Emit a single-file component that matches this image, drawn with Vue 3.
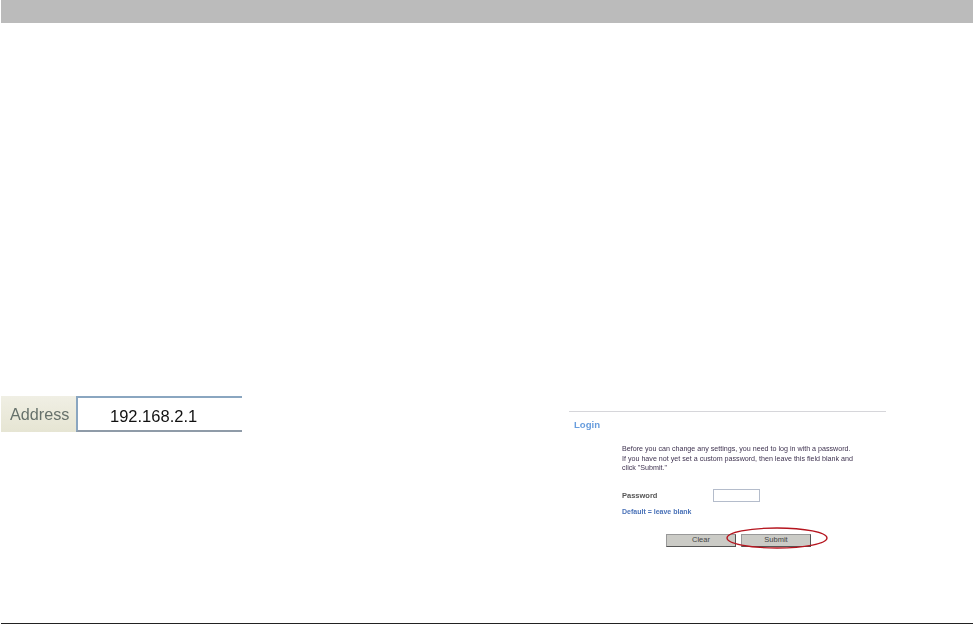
<script setup>
const lines = [
  'Before you can change any settings, you need to log in with a password.',
  'If you have not yet set a custom password, then leave this field blank and',
  'click "Submit."'
]
</script>

<template>
  <div class="page">
    <header class="bar"></header>
    <main class="content">
      <section class="address">
        <div class="label">Address</div>
        <div class="field">192.168.2.1</div>
      </section>
      <section class="login">
        <h2 class="title">Login</h2>
        <div class="body">
          <p v-for="line in lines" :key="line" class="line">{{ line }}</p>
          <div class="pw-row">
            <span class="pw-label">Password</span>
            <span class="pw-input"></span>
          </div>
          <div class="hint">Default = leave blank</div>
        </div>
        <div class="buttons">
          <button class="btn" type="button">Clear</button>
          <button class="btn" type="button">Submit</button>
          <svg class="ring" width="102" height="22" viewBox="0 0 102 22">
            <ellipse cx="51" cy="11" rx="50" ry="10" fill="none" stroke="#b5141e" stroke-width="1.3" />
          </svg>
        </div>
      </section>
    </main>
    <footer class="foot"></footer>
  </div>
</template>

<style scoped>
.page {
  width: 973px;
  height: 624px;
  display: flex;
  flex-direction: column;
  background: #fff;
  overflow: hidden;
  font-family: "Liberation Sans", Arial, sans-serif;
}
.bar {
  height: 23px;
  margin-left: 1px;
  background: #bbbbbb;
  flex: none;
}
.content {
  flex: 1;
  display: flex;
  align-items: flex-start;
  padding: 373px 87px 0 1px;
}
.address {
  width: 241px;
  height: 36px;
  display: flex;
  flex: none;
  margin-right: 327px;
}
.label {
  width: 75px;
  background: linear-gradient(#f0efe4, #e6e5d3);
  color: #66716b;
  font-family: "Liberation Sans", sans-serif;
  font-size: 16.2px;
  line-height: 36px;
  padding-left: 9px;
  box-sizing: border-box;
  filter: blur(0.4px);
}
.field {
  flex: 1;
  border-top: 2px solid #8aa6c0;
  border-left: 2px solid #8aa6c0;
  border-bottom: 2px solid #8f9ba8;
  color: #111;
  font-size: 16.5px;
  line-height: 36px;
  height: 32px;
  padding-left: 32px;
  font-family: "Liberation Sans", sans-serif;
  filter: blur(0.3px);
}
.login {
  width: 317px;
  flex: none;
  margin-top: 15px;
  border-top: 1px solid #d6d6da;
  height: 150px;
  box-sizing: content-box;
}
.title {
  margin: 7px 0 0 5px;
  font-size: 9.6px;
  line-height: 12px;
  font-weight: bold;
  color: #689ddd;
  filter: blur(0.4px);
}
.body {
  margin: 14px 0 0 53px;
}
.line {
  margin: 0;
  font-size: 7.13px;
  line-height: 9.5px;
  color: #3f3350;
  white-space: nowrap;
  filter: blur(0.4px);
}
.pw-row {
  display: flex;
  align-items: center;
  margin-top: 15px;
}
.pw-label {
  width: 91px;
  font-size: 7.5px;
  font-weight: bold;
  color: #555;
  filter: blur(0.4px);
}
.pw-input {
  width: 47px;
  height: 13px;
  box-sizing: border-box;
  border: 1px solid #b4bccb;
  background: #fff;
}
.hint {
  margin-top: 5px;
  font-size: 7px;
  line-height: 10px;
  color: #4a72b8;
  font-weight: bold;
  filter: blur(0.4px);
}
.buttons {
  position: relative;
  display: flex;
  gap: 5px;
  margin: 17px 0 0 97px;
}
.btn {
  width: 70px;
  height: 13px;
  padding: 0;
  box-sizing: border-box;
  background: #cbcbc6;
  border: 1px solid #555;
  border-top-color: #999;
  border-left-color: #999;
  font-family: inherit;
  font-size: 7.5px;
  line-height: 10px;
  color: #444;
}
.ring {
  position: absolute;
  left: 60px;
  top: -7px;
}
.foot {
  flex: none;
  height: 1px;
  margin: 0 0 0 1px;
  background: #222;
}
</style>
